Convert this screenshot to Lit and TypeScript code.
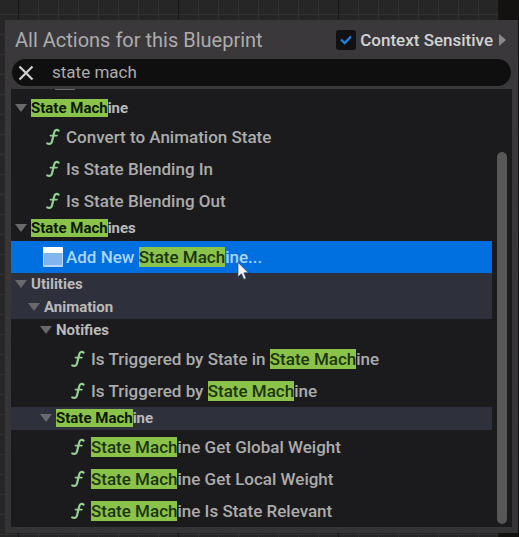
import { LitElement, html, css, svg, nothing } from "lit";
import { customElement } from "lit/decorators.js";
import { classMap } from "lit/directives/class-map.js";

interface Entry {
  label: string;
  icon: "function" | "machine";
  selected?: boolean;
}

interface Category {
  label: string;
  depth: number;
  shaded?: boolean;
  entries: Entry[];
}

const QUERY = "State Mach";

const fn = (label: string): Entry => ({ label, icon: "function" });

const CATEGORIES: Category[] = [
  {
    label: "State Machine",
    depth: 0,
    entries: [fn("Convert to Animation State"), fn("Is State Blending In"), fn("Is State Blending Out")],
  },
  {
    label: "State Machines",
    depth: 0,
    entries: [{ label: "Add New State Machine...", icon: "machine", selected: true }],
  },
  { label: "Utilities", depth: 0, shaded: true, entries: [] },
  { label: "Animation", depth: 1, shaded: true, entries: [] },
  {
    label: "Notifies",
    depth: 2,
    entries: [fn("Is Triggered by State in State Machine"), fn("Is Triggered by State Machine")],
  },
  {
    label: "State Machine",
    depth: 2,
    shaded: true,
    entries: [
      fn("State Machine Get Global Weight"),
      fn("State Machine Get Local Weight"),
      fn("State Machine Is State Relevant"),
    ],
  },
];

const functionIcon = html`<svg class="icon" viewBox="0 0 20 20" aria-hidden="true">
  ${svg`<path d="M15.6 3.6C14 2.4 11.8 2.8 11.2 5.4L9 14.4C8.4 16.8 6.2 17.6 4.2 16.4"
      fill="none" stroke="#93cf92" stroke-width="2.2" stroke-linecap="round" />
    <path d="M7.4 8.6H14" stroke="#93cf92" stroke-width="1.6" stroke-linecap="round" />`}
</svg>`;

const machineIcon = html`<svg class="icon" viewBox="0 0 20 20" aria-hidden="true">
  ${svg`<rect x="0" y="0" width="20" height="20" rx="1" fill="#b9d8fb" />
    <rect x="1" y="6" width="18" height="12" fill="#82b4ee" />
    <rect x="0" y="0" width="20" height="6" rx="1" fill="#ffffff" />`}
</svg>`;

@customElement("app-root")
export class AppRoot extends LitElement {
  static styles = css`
    :host {
      display: block;
      box-sizing: border-box;
      min-height: 100vh;
      padding: 20px 1px 5px 5px;
      font-family: Roboto, "Liberation Sans", sans-serif;
      color: #acacac;
      background:
        linear-gradient(#131211, #131211) right / 20px 100% no-repeat,
        repeating-linear-gradient(90deg, transparent 0 18px, #171717 18px 19px, transparent 19px 160px),
        repeating-linear-gradient(90deg, transparent 0 18px, #313131 18px 19px, transparent 19px 20px),
        repeating-linear-gradient(transparent 0 14px, #313131 14px 15px, transparent 15px 20px),
        #262626;
    }
    * {
      box-sizing: border-box;
    }
    .panel {
      padding: 0 6px 6px;
      background: linear-gradient(#3a383b, #343335);
    }
    .top {
      display: flex;
      align-items: center;
      height: 39px;
      padding: 1px 0 0 4px;
    }
    h1 {
      flex: 1;
      margin: 0;
      font-size: 20px;
      font-weight: 400;
      white-space: nowrap;
    }
    .context {
      display: flex;
      align-items: center;
      gap: 4px;
      font-size: 17px;
      font-weight: 500;
      color: #d2d2d2;
      white-space: nowrap;
    }
    .check {
      display: grid;
      width: 20px;
      height: 20px;
    }
    .check input,
    .check svg {
      grid-area: 1 / 1;
      width: 20px;
      height: 20px;
      margin: 0;
    }
    .check input {
      appearance: none;
      border-radius: 3px;
      background: #111112;
    }
    .check svg {
      visibility: hidden;
      pointer-events: none;
    }
    .check input:checked + svg {
      visibility: visible;
    }
    .more {
      display: flex;
      padding: 0;
      margin: 0 6px 0 6px;
      border: 0;
      background: none;
    }
    .search {
      display: flex;
      align-items: center;
      height: 27px;
      margin: 0 1px 3px;
      border-radius: 14px;
      background: #0f0f10;
    }
    .clear {
      display: flex;
      padding: 0;
      margin: 0 18px 0 6px;
      border: 0;
      background: none;
    }
    .search input {
      flex: 1;
      min-width: 0;
      padding: 0 12px 2px 0;
      border: 0;
      outline: 0;
      background: none;
      color: #acacac;
      font: 17px Roboto, "Liberation Sans", sans-serif;
    }
    .results {
      display: flex;
      background: #1b1b1d;
    }
    .tree {
      flex: 1;
      min-width: 0;
    }
    .clipped {
      height: 8px;
      padding-left: 44px;
    }
    .clipped span {
      display: block;
      width: 20px;
      height: 1px;
      background: #6a6a6b;
    }
    .category {
      display: flex;
      align-items: center;
      gap: 4px;
      height: 23px;
      padding: 0 0 2px 4px;
      font-size: 15px;
      font-weight: 700;
      color: #bababa;
    }
    .category.depth1 {
      padding-left: 17px;
    }
    .category.depth2 {
      padding-left: 29px;
    }
    .category.shaded {
      background: #2e303c;
    }
    .arrow {
      width: 12px;
      height: 8px;
    }
    .entries {
      margin: 0;
      padding: 1px 0 0;
      list-style: none;
    }
    .entry {
      display: flex;
      align-items: center;
      gap: 3px;
      height: 32px;
      padding-left: 32px;
      font-size: 17px;
      font-weight: 500;
      white-space: nowrap;
    }
    .entries.depth2 .entry {
      padding-left: 57px;
    }
    .entry.selected {
      background: #0070e0;
      color: #a9d5ff;
    }
    .icon {
      width: 20px;
      height: 20px;
    }
    mark {
      background: #8bc24a;
      color: #1c3510;
    }
    .category mark {
      color: #0b1806;
    }
    .track {
      width: 20px;
      padding: 63px 5px 3px 5px;
    }
    .thumb {
      height: 100%;
      border-radius: 5px;
      background: #575757;
    }
    .cursor {
      position: absolute;
      left: 237px;
      top: 261px;
      width: 12px;
      height: 20px;
    }
  `;

  private highlight(label: string) {
    const at = label.indexOf(QUERY);
    if (at < 0) return html`<span>${label}</span>`;
    return html`<span
      >${label.slice(0, at)}<mark>${QUERY}</mark>${label.slice(at + QUERY.length)}</span
    >`;
  }

  private category(c: Category) {
    const depth = { depth1: c.depth === 1, depth2: c.depth === 2 };
    return html`
      <div class=${classMap({ category: true, shaded: !!c.shaded, ...depth })}>
        <svg class="arrow" viewBox="0 0 12 8" aria-hidden="true"><path d="M0 0H12L6 8Z" fill="#69696d" /></svg>
        ${this.highlight(c.label)}
      </div>
      ${c.entries.length
        ? html`<ul class=${classMap({ entries: true, ...depth })}>
            ${c.entries.map(
              (e) => html`<li class=${classMap({ entry: true, selected: !!e.selected })}>
                ${e.icon === "function" ? functionIcon : machineIcon} ${this.highlight(e.label)}
              </li>`
            )}
          </ul>`
        : nothing}
    `;
  }

  render() {
    return html`
      <main class="panel">
        <header class="top">
          <h1>All Actions for this Blueprint</h1>
          <label class="context">
            <span class="check">
              <input type="checkbox" checked />
              <svg viewBox="0 0 20 20" aria-hidden="true">
                <path d="M5 9.5L8.7 13L15 6.5" fill="none" stroke="#2080df" stroke-width="2.4" />
              </svg>
            </span>
            Context Sensitive
          </label>
          <button class="more" aria-label="More options">
            <svg width="7" height="12" viewBox="0 0 7 12"><path d="M0 0L7 6L0 12Z" fill="#8a898c" /></svg>
          </button>
        </header>
        <div class="search">
          <button class="clear" aria-label="Clear search">
            <svg width="16" height="16" viewBox="0 0 16 16">
              <path d="M1.5 1.5L14.5 14.5M14.5 1.5L1.5 14.5" stroke="#d0d0d0" stroke-width="2.2" />
            </svg>
          </button>
          <input type="text" aria-label="Search actions" value="state mach" />
        </div>
        <section class="results">
          <div class="tree">
            <div class="clipped"><span></span></div>
            ${CATEGORIES.map((c) => this.category(c))}
          </div>
          <div class="track"><div class="thumb"></div></div>
        </section>
      </main>
      <svg class="cursor" viewBox="0 0 13 21" aria-hidden="true">
        <path d="M1 1V17L4.8 13.5L7.4 19.6L10 18.4L7.5 12.5H12.5Z" fill="#f4f4f4" stroke="#1c3c66" stroke-width="0.8" />
      </svg>
    `;
  }
}
